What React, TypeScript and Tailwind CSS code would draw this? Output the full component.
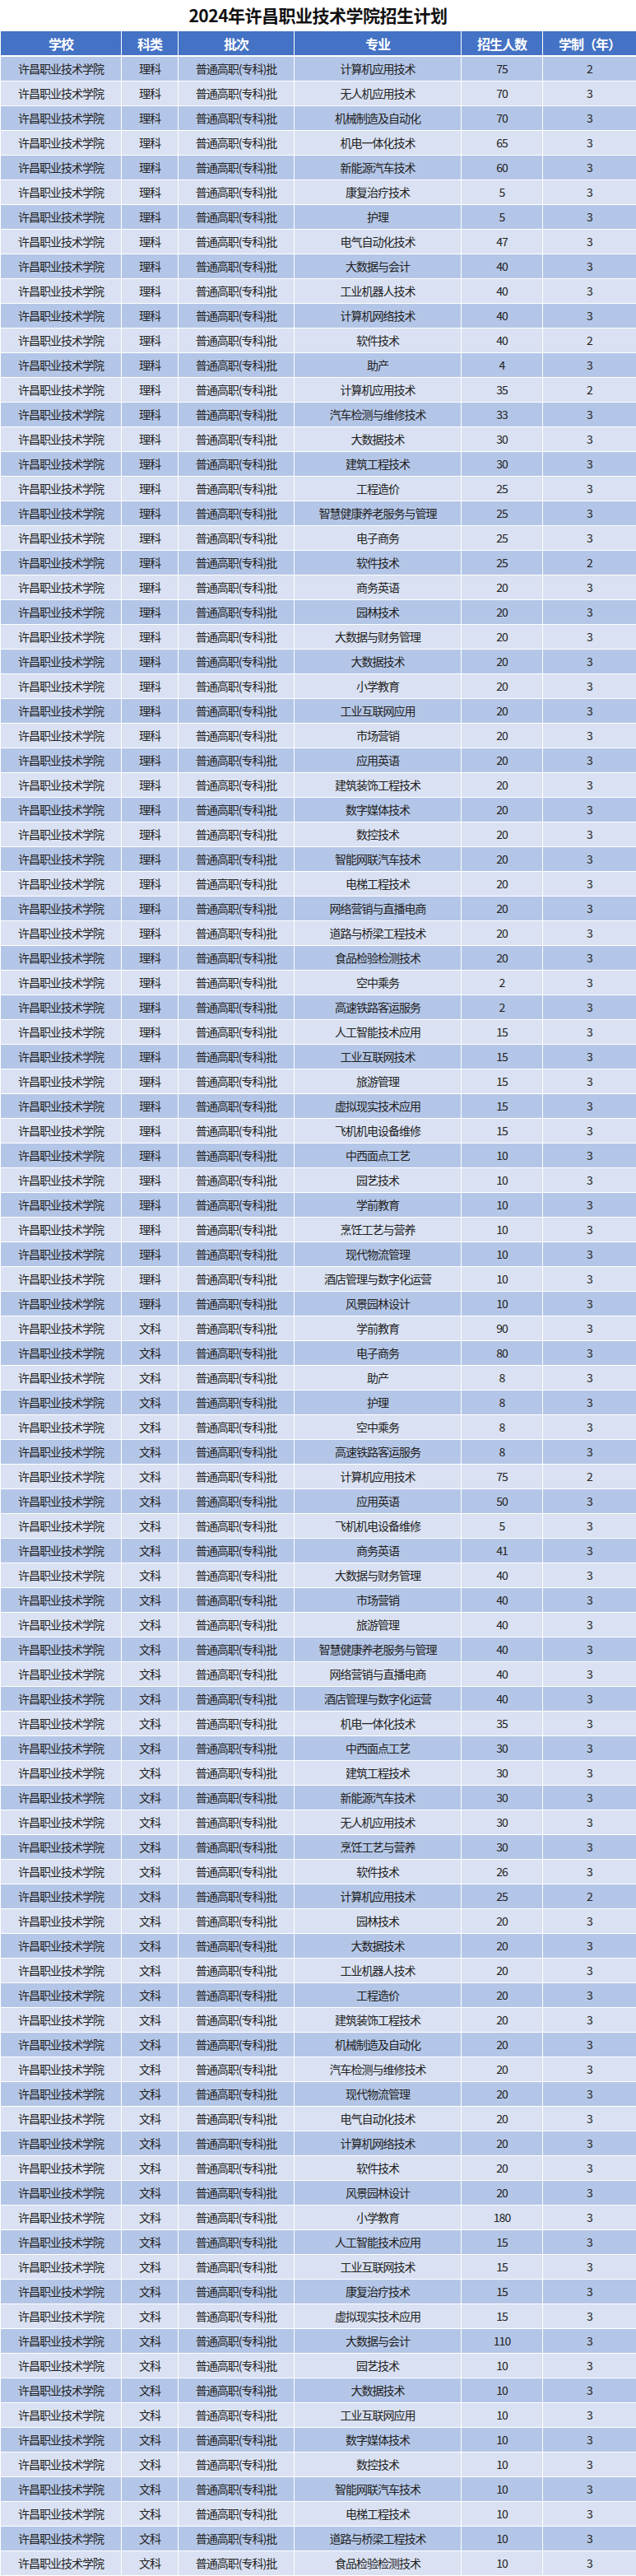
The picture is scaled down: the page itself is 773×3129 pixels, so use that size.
// 2024年许昌职业技术学院招生计划
type PlanRow = [string, number, number];

const SCHOOL = "许昌职业技术学院";
const BATCH = "普通高职(专科)批";

const science: PlanRow[] = [
  ["计算机应用技术", 75, 2],
  ["无人机应用技术", 70, 3],
  ["机械制造及自动化", 70, 3],
  ["机电一体化技术", 65, 3],
  ["新能源汽车技术", 60, 3],
  ["康复治疗技术", 5, 3],
  ["护理", 5, 3],
  ["电气自动化技术", 47, 3],
  ["大数据与会计", 40, 3],
  ["工业机器人技术", 40, 3],
  ["计算机网络技术", 40, 3],
  ["软件技术", 40, 2],
  ["助产", 4, 3],
  ["计算机应用技术", 35, 2],
  ["汽车检测与维修技术", 33, 3],
  ["大数据技术", 30, 3],
  ["建筑工程技术", 30, 3],
  ["工程造价", 25, 3],
  ["智慧健康养老服务与管理", 25, 3],
  ["电子商务", 25, 3],
  ["软件技术", 25, 2],
  ["商务英语", 20, 3],
  ["园林技术", 20, 3],
  ["大数据与财务管理", 20, 3],
  ["大数据技术", 20, 3],
  ["小学教育", 20, 3],
  ["工业互联网应用", 20, 3],
  ["市场营销", 20, 3],
  ["应用英语", 20, 3],
  ["建筑装饰工程技术", 20, 3],
  ["数字媒体技术", 20, 3],
  ["数控技术", 20, 3],
  ["智能网联汽车技术", 20, 3],
  ["电梯工程技术", 20, 3],
  ["网络营销与直播电商", 20, 3],
  ["道路与桥梁工程技术", 20, 3],
  ["食品检验检测技术", 20, 3],
  ["空中乘务", 2, 3],
  ["高速铁路客运服务", 2, 3],
  ["人工智能技术应用", 15, 3],
  ["工业互联网技术", 15, 3],
  ["旅游管理", 15, 3],
  ["虚拟现实技术应用", 15, 3],
  ["飞机机电设备维修", 15, 3],
  ["中西面点工艺", 10, 3],
  ["园艺技术", 10, 3],
  ["学前教育", 10, 3],
  ["烹饪工艺与营养", 10, 3],
  ["现代物流管理", 10, 3],
  ["酒店管理与数字化运营", 10, 3],
  ["风景园林设计", 10, 3],
];

const arts: PlanRow[] = [
  ["学前教育", 90, 3],
  ["电子商务", 80, 3],
  ["助产", 8, 3],
  ["护理", 8, 3],
  ["空中乘务", 8, 3],
  ["高速铁路客运服务", 8, 3],
  ["计算机应用技术", 75, 2],
  ["应用英语", 50, 3],
  ["飞机机电设备维修", 5, 3],
  ["商务英语", 41, 3],
  ["大数据与财务管理", 40, 3],
  ["市场营销", 40, 3],
  ["旅游管理", 40, 3],
  ["智慧健康养老服务与管理", 40, 3],
  ["网络营销与直播电商", 40, 3],
  ["酒店管理与数字化运营", 40, 3],
  ["机电一体化技术", 35, 3],
  ["中西面点工艺", 30, 3],
  ["建筑工程技术", 30, 3],
  ["新能源汽车技术", 30, 3],
  ["无人机应用技术", 30, 3],
  ["烹饪工艺与营养", 30, 3],
  ["软件技术", 26, 3],
  ["计算机应用技术", 25, 2],
  ["园林技术", 20, 3],
  ["大数据技术", 20, 3],
  ["工业机器人技术", 20, 3],
  ["工程造价", 20, 3],
  ["建筑装饰工程技术", 20, 3],
  ["机械制造及自动化", 20, 3],
  ["汽车检测与维修技术", 20, 3],
  ["现代物流管理", 20, 3],
  ["电气自动化技术", 20, 3],
  ["计算机网络技术", 20, 3],
  ["软件技术", 20, 3],
  ["风景园林设计", 20, 3],
  ["小学教育", 180, 3],
  ["人工智能技术应用", 15, 3],
  ["工业互联网技术", 15, 3],
  ["康复治疗技术", 15, 3],
  ["虚拟现实技术应用", 15, 3],
  ["大数据与会计", 110, 3],
  ["园艺技术", 10, 3],
  ["大数据技术", 10, 3],
  ["工业互联网应用", 10, 3],
  ["数字媒体技术", 10, 3],
  ["数控技术", 10, 3],
  ["智能网联汽车技术", 10, 3],
  ["电梯工程技术", 10, 3],
  ["道路与桥梁工程技术", 10, 3],
  ["食品检验检测技术", 10, 3],
];

const rows = [
  ...science.map((r) => ({ kind: "理科", major: r[0], count: r[1], years: r[2] })),
  ...arts.map((r) => ({ kind: "文科", major: r[0], count: r[1], years: r[2] })),
];

const headers = ["学校", "科类", "批次", "专业", "招生人数", "学制（年）"];

const gridCols = "grid grid-cols-[146px_68px_140px_202px_98px_113px] gap-x-px pl-px";

export default function App() {
  return (
    <div className="w-[773px] bg-white font-['Noto_Sans_CJK_SC','Noto_Sans',sans-serif]">
      <div className="h-[38px] flex items-center justify-center">
        <h1 className="text-[21px] font-bold tracking-[-0.5px] text-[#111]">
          2024年许昌职业技术学院招生计划
        </h1>
      </div>

      <div className={`${gridCols} h-[29px] mb-[2px]`}>
        {headers.map((h) => (
          <div
            key={h}
            className="bg-[#4472c4] text-white text-[16px] font-bold tracking-[-1px] flex items-center justify-center"
          >
            {h}
          </div>
        ))}
      </div>

      {rows.map((row, i) => {
        const bg = i % 2 === 0 ? "bg-[#b4c6e7]" : "bg-[#d9e1f2]";
        const cells = [SCHOOL, row.kind, BATCH, row.major, String(row.count), String(row.years)];
        return (
          <div key={i} className={`${gridCols} h-[29px] mb-px`}>
            {cells.map((c, j) => (
              <div
                key={j}
                className={`${bg} text-[#222] text-[14px] tracking-[-1px] flex items-center justify-center whitespace-nowrap`}
              >
                {c}
              </div>
            ))}
          </div>
        );
      })}
    </div>
  );
}
